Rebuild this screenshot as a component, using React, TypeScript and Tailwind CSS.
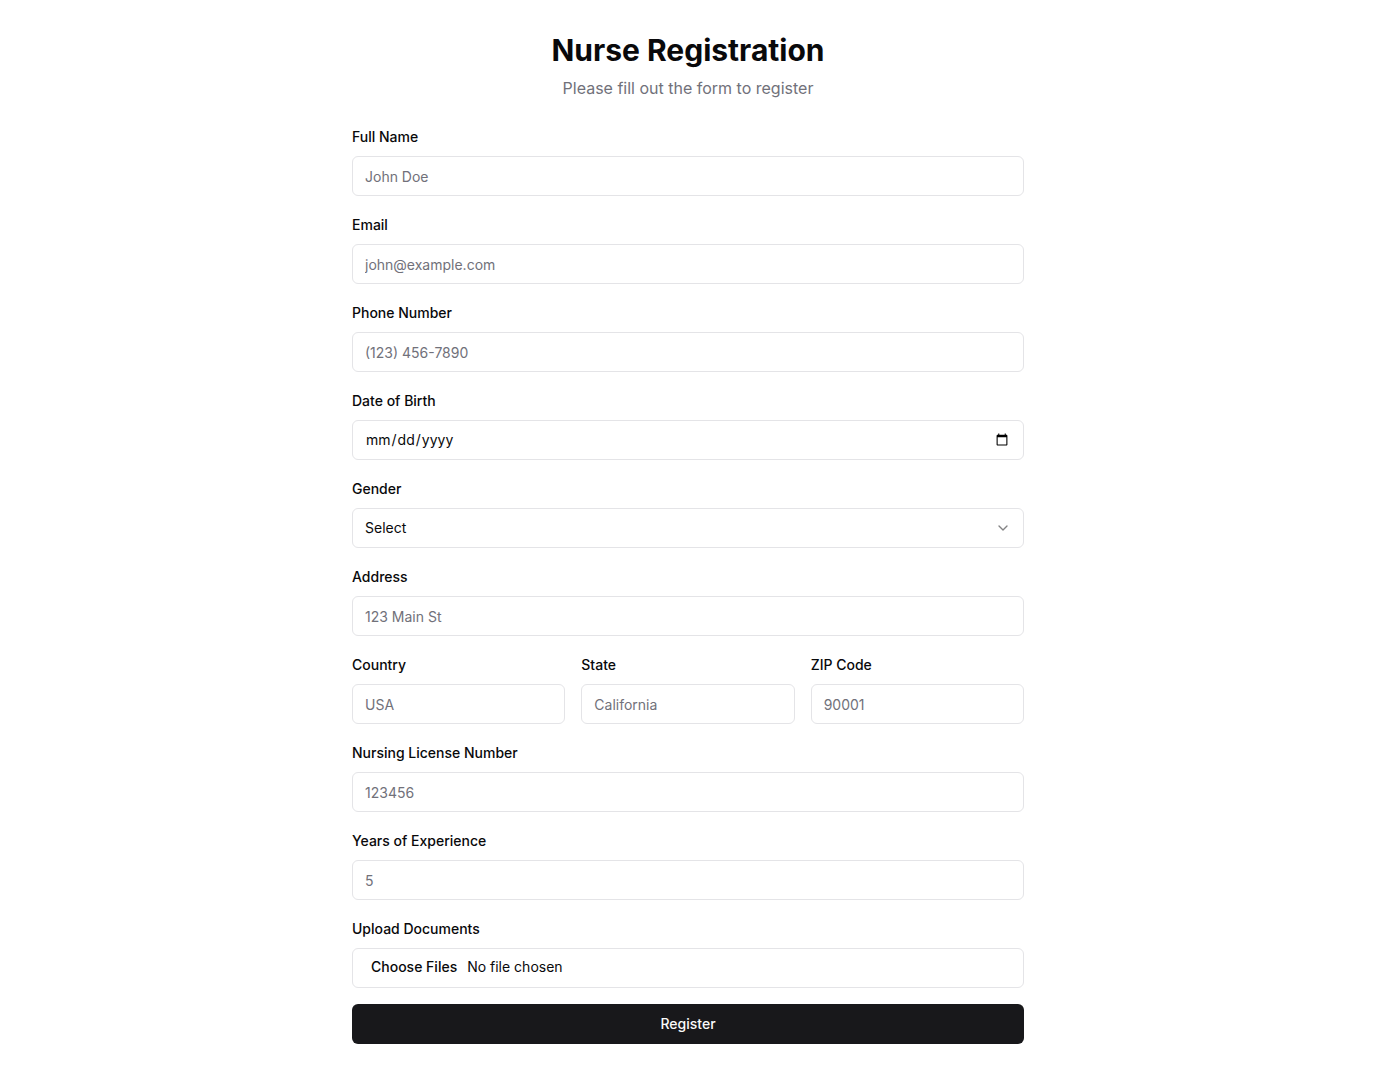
import { ChevronDown } from 'lucide-react';

const baseCls =
  'h-10 w-full rounded-md border border-[#e4e4e7] bg-white px-3 py-2 text-sm text-[#09090b] placeholder:text-[#71717a] outline-none';
const inputCls = `flex ${baseCls}`;

function Field({ label, children }: { label: string; children: React.ReactNode }) {
  return (
    <div className="flex flex-col gap-[9px]">
      <label className="-mt-px text-sm font-medium leading-5 text-[#09090b]">{label}</label>
      {children}
    </div>
  );
}

export default function App() {
  return (
    <div
      className="min-h-screen bg-white"
      style={{ fontFamily: 'Inter, "Noto Sans", sans-serif' }}
    >
      <div className="mx-auto w-[672px] pt-8 pb-8">
        <div className="flex flex-col items-center gap-2">
          <h1 className="text-3xl font-bold leading-9 text-[#09090b]">Nurse Registration</h1>
          <p className="text-base leading-6 text-[#71717a]">Please fill out the form to register</p>
        </div>

        <form className="mt-7 flex flex-col gap-4" onSubmit={(e) => e.preventDefault()}>
          <div className="flex flex-col gap-5">
            <Field label="Full Name">
              <input className={inputCls} placeholder="John Doe" />
            </Field>
            <Field label="Email">
              <input className={inputCls} type="email" placeholder="john@example.com" />
            </Field>
            <Field label="Phone Number">
              <input className={inputCls} type="tel" placeholder="(123) 456-7890" />
            </Field>
            <Field label="Date of Birth">
              <input className={`block ${baseCls}`} type="date" />
            </Field>
            <Field label="Gender">
              <button
                type="button"
                className="flex h-10 w-full items-center justify-between rounded-md border border-[#e4e4e7] bg-white px-3 py-2 text-sm text-[#09090b]"
              >
                <span>Select</span>
                <ChevronDown className="h-4 w-4 opacity-50" />
              </button>
            </Field>
            <Field label="Address">
              <input className={inputCls} placeholder="123 Main St" />
            </Field>
            <div className="grid grid-cols-3 gap-4">
              <Field label="Country">
                <input className={inputCls} placeholder="USA" />
              </Field>
              <Field label="State">
                <input className={inputCls} placeholder="California" />
              </Field>
              <Field label="ZIP Code">
                <input className={inputCls} placeholder="90001" />
              </Field>
            </div>
            <Field label="Nursing License Number">
              <input className={inputCls} placeholder="123456" />
            </Field>
            <Field label="Years of Experience">
              <input className={inputCls} type="number" placeholder="5" />
            </Field>
            <Field label="Upload Documents">
              <input
                className={`${inputCls} file:mr-1 file:border-0 file:bg-transparent file:px-1.5 file:text-sm file:font-medium file:text-[#09090b]`}
                type="file"
                multiple
              />
            </Field>
          </div>
          <button
            type="submit"
            className="h-10 w-full rounded-md bg-[#18181b] text-sm font-medium text-[#fafafa]"
          >
            Register
          </button>
        </form>
      </div>
    </div>
  );
}
